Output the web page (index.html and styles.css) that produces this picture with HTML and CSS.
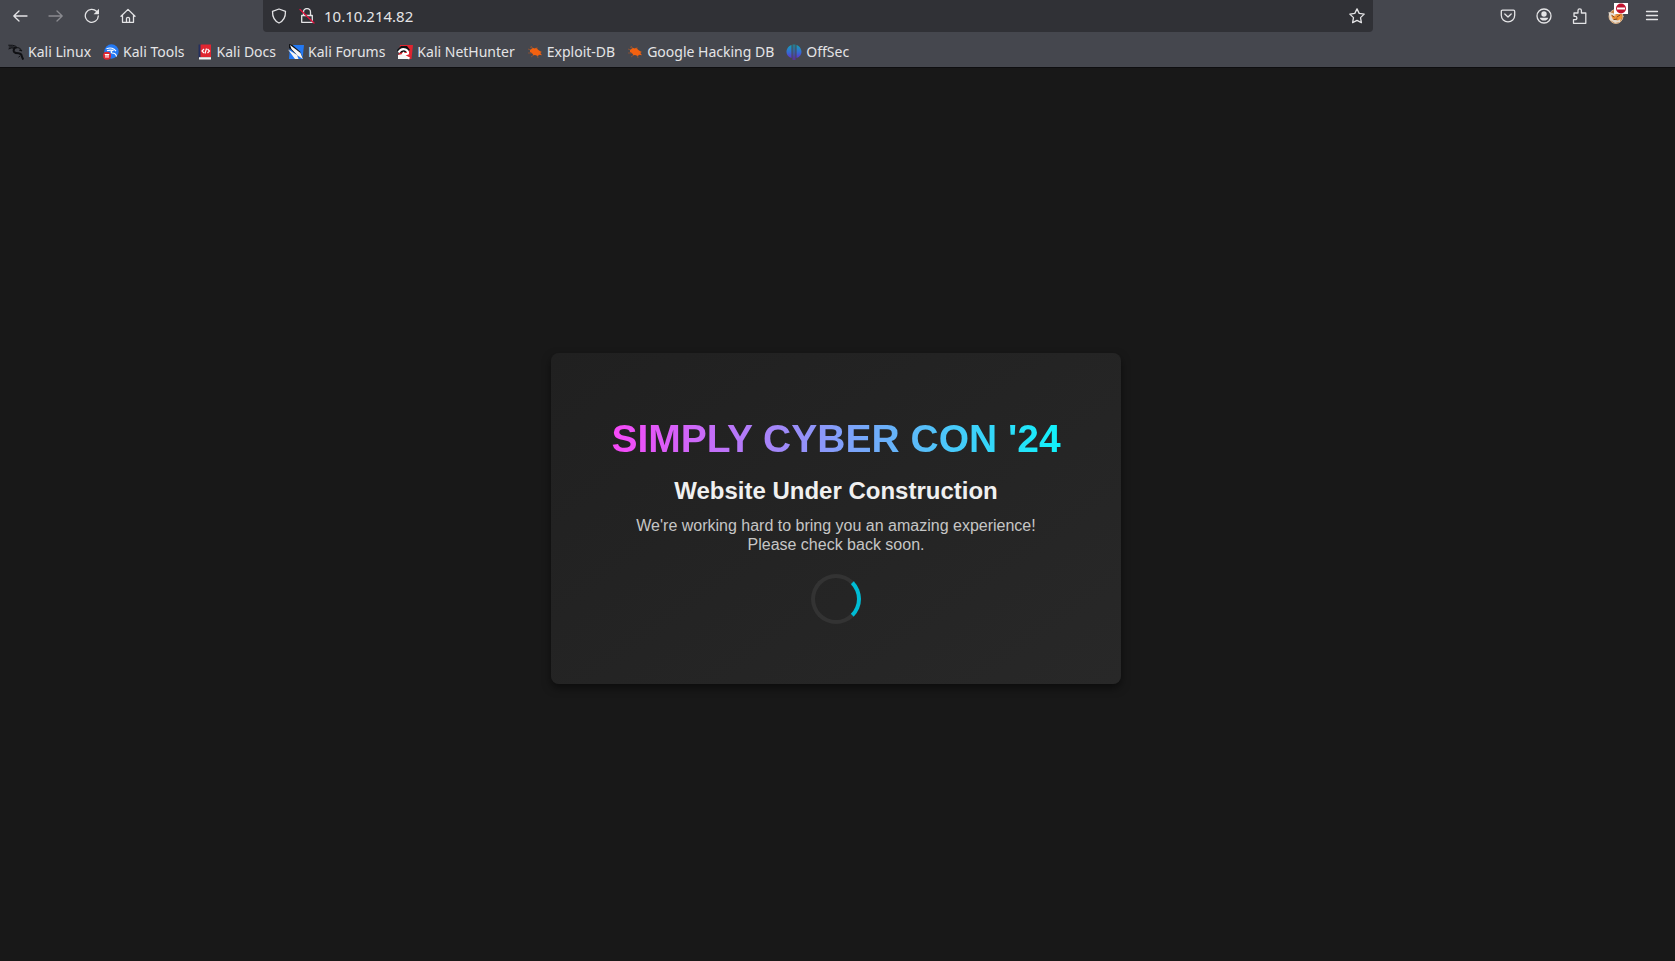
FILE: index.html
```html
<!DOCTYPE html>
<html lang="en">
<head>
<meta charset="utf-8">
<title>Simply Cyber Con '24</title>
<link rel="stylesheet" href="styles.css">
</head>
<body>
<header class="chrome">
  <div class="toolbar">
    <nav class="nav-buttons" aria-label="Navigation">
      <button class="tool" aria-label="Back"><svg viewBox="0 0 16 16"><path d="M15 8H1.800M7 3L1.800 8l5.200 5"/></svg></button>
      <button class="tool" aria-label="Forward" disabled><svg viewBox="0 0 16 16"><path d="M1 8h13.200M9 3L14.200 8l-5.200 5"/></svg></button>
      <button class="tool" aria-label="Reload"><svg viewBox="0 0 16 16"><path d="M14.300 8A6.500 6.500 0 1 1 12.500 3.300"/><path class="solid" d="M15 .8v5.400H9.600z"/></svg></button>
      <button class="tool" aria-label="Home"><svg viewBox="0 0 16 16"><path d="M1 8.300L8 1.400l7 6.900M2.500 7v7.300h11V7M6.500 14v-3.500q0-1.200 1.500-1.200t1.500 1.200V14"/></svg></button>
    </nav>
    <form class="address">
      <button type="button" class="field-icon" aria-label="Tracking protection"><svg viewBox="0 0 16 16"><path d="M8 1L14.500 3.300C14.600 9 12 13.300 8 15 4 13.300 1.400 9 1.500 3.300z"/></svg></button>
      <button type="button" class="field-icon" aria-label="Connection not secure"><svg viewBox="0 0 16 16"><path d="M4.500 7V4a3.500 3.500 0 0 1 7 0v3M2.700 7.500h10.600v6.800H2.700z"/><path class="slash" d="M1 1.500L15 15"/></svg></button>
      <input class="url" type="text" value="10.10.214.82" aria-label="Address">
      <button type="button" class="field-icon" aria-label="Bookmark this page"><svg viewBox="0 0 16 16"><path d="M8 .9l2.200 4.500 5 .7-3.700 3.500.9 5L8 12.300l-4.400 2.300.9-5L.8 6.100l5-.7z"/></svg></button>
    </form>
    <div class="actions">
      <button class="tool" aria-label="Pocket"><svg viewBox="0 0 16 16"><path d="M2.500 2.200h11q1.200 0 1.200 1.200v3.800a6.700 6.700 0 0 1-13.400 0V3.400q0-1.200 1.200-1.200zM4.800 6L8 9l3.200-3"/></svg></button>
      <button class="tool" aria-label="Account"><svg viewBox="0 0 16 16"><circle cx="8" cy="8" r="7"/><circle class="solid" cx="8" cy="6" r="2.700"/><path class="solid" d="M3.800 9.800h8.400Q11.500 12.600 8 12.600T3.800 9.800z"/></svg></button>
      <button class="tool" aria-label="Extensions"><svg viewBox="0 0 16 16"><path d="M1.500 15.300V11.700h1.700a1.700 1.700 0 0 0 0-3.400H2V5h4V2.600a1.700 1.700 0 0 1 3.400 0V5h4.400v10.300z"/></svg></button>
      <button class="tool proxy" aria-label="FoxyProxy, disabled"><svg viewBox="0 0 16 16"><circle class="f-face" cx="8" cy="8.500" r="7"/><path class="f-white" d="M.5 4l4 1L13 9l-1 5-5 1-5-3z"/><path class="f-fur" d="M3 7l3 1 7-3 1 5-4 2.500-5-1z"/><path class="f-eye" d="M4 7.500l2 1.500M9 9l3-2M6 11.500l3-.5"/></svg><svg class="proxy-badge" viewBox="0 0 14 11"><path class="b-bg" d="M0 0h14v11H0z"/><circle class="b-red" cx="7" cy="5.500" r="5"/><path class="b-bar" d="M3 4.500h8v2H3z"/></svg></button>
      <button class="tool" aria-label="Menu"><svg viewBox="0 0 16 16"><path d="M2.500 3.500h11M2.500 7.500h11M2.500 11.500h11"/></svg></button>
    </div>
  </div>
  <nav class="bookmarks" aria-label="Bookmarks">
    <a class="bookmark" href="#"><svg viewBox="0 0 16 16"><path class="scribble" d="M.3 1.200Q5 .8 8.500 2.500M.8 3Q5 2.300 9 4M.5 5Q3 3.300 6.500 4.200"/><path class="body" d="M7.500 3.500Q4.800 5.500 6 7.800q1.200 1.500 4.500 1.500 3.200.5 3.300 3l1.400 3.200"/><path class="scribble" d="M8 3.500l3.500.5 2.500 3-3-1M12 12l-1.500 1.200"/></svg>Kali Linux</a>
    <a class="bookmark" href="#"><svg viewBox="0 0 16 16"><circle class="blue" cx="8.500" cy="7.500" r="7.200"/><path class="line-white" d="M3.500 4.800q4-1.800 7.500.4l2 2M4 6.800q3-1.200 5.500-.4-2.500 1.200-.5 2.600 4 .2 4.500 3.500"/><circle class="red" cx="4" cy="11.800" r="4"/><path class="line-white" d="M1.800 10.500h4.400M3 10.500v3.300M5 10.500v3.300"/></svg>Kali Tools</a>
    <a class="bookmark" href="#"><svg viewBox="0 0 16 16"><path class="navy" d="M1.500.5h3V14h-3z"/><path class="red" d="M3.500.5H14v12.700H3.500z"/><path class="white" d="M2 13.200h12v2.300H2z"/><path class="line-white" d="M7 5L5 7l2 2M10.500 5l2 2-2 2M9.500 4.500L8 9.500"/></svg>Kali Docs</a>
    <a class="bookmark" href="#"><svg viewBox="0 0 16 16"><path class="blue" d="M2 1h14l-1.500 14H1z"/><path class="dragon" d="M1 0l3.500 1L12 7.500l3 7-6-3.500L1 4z"/><path class="white" d="M2 1l6 4.500 4.500 3.500 2.500 6-5.500-3.500L3.500 5zM0 5.500L9 11l1.500 4H7z"/></svg>Kali Forums</a>
    <a class="bookmark" href="#"><svg viewBox="0 0 16 16"><path class="red" d="M3 1h13l-1.500 14H1z"/><path class="dragon" d="M0 6l4-4 6 0 3 4-4 2-8 1z"/><path class="line-white heavy" d="M1.500 8.500Q4 4 8.500 5.500q3 1.500 2.500 4-3 1.500-4.500-.5-2 2 1 3l5 2.500"/><path class="white" d="M1 11l5-1 6 5H1z"/></svg>Kali NetHunter</a>
    <a class="bookmark" href="#"><svg viewBox="0 0 16 16"><path class="legs" d="M1 5l5 2M4 2l4 5M10 3v4M1 9h5M4 13l4-3M11 14l-1-4M15 8l-4 0M3 3l5 3"/><path class="bug" d="M3 6l3-2 2 .5 1-.7 2 2 3 2-.5 1.500 1.500 2-3-.5-1 1.200-3-1-1.500.3L5 9 3 8z"/></svg>Exploit-DB</a>
    <a class="bookmark" href="#"><svg viewBox="0 0 16 16"><path class="legs" d="M1 5l5 2M4 2l4 5M10 3v4M1 9h5M4 13l4-3M11 14l-1-4M15 8l-4 0M3 3l5 3"/><path class="bug" d="M3 6l3-2 2 .5 1-.7 2 2 3 2-.5 1.500 1.500 2-3-.5-1 1.200-3-1-1.500.3L5 9 3 8z"/></svg>Google Hacking DB</a>
    <a class="bookmark" href="#"><svg viewBox="0 0 16 16"><defs><linearGradient id="offsec" x1="0" y1="0" x2="0" y2="1"><stop offset="0" stop-color="#12a5b5"/><stop offset=".5" stop-color="#356bd3"/><stop offset="1" stop-color="#6b20c8"/></linearGradient></defs><path fill="url(#offsec)" d="M5.500 1v13C2 13 .5 10.500.5 8s1.500-5.800 5-7zM10.500 1v13c3.500-1 5-3.500 5-6s-1.500-5.800-5-7zM6.700.5h.9V16h-.9zM8.400.5h.9V16h-.9z"/></svg>OffSec</a>
  </nav>
</header>
<main class="page">
  <section class="card">
    <h1 class="title">SIMPLY CYBER CON '24</h1>
    <h2 class="subtitle">Website Under Construction</h2>
    <p class="message">We're working hard to bring you an amazing experience!<br>Please check back soon.</p>
    <div class="spinner" role="status" aria-label="Loading"></div>
  </section>
</main>
</body>
</html>
```
FILE: styles.css
```css
* { box-sizing: border-box; }
body {
  margin: 0;
  min-height: 100vh;
  display: flex;
  flex-direction: column;
  background: #181818;
  font-family: "Liberation Sans", Arial, sans-serif;
}
button { padding: 0; border: 0; background: none; color: inherit; }
svg { display: block; width: 16px; height: 16px; fill: none; stroke: none; flex: none; }
.chrome {
  background: #45474e;
  color: #e4e4e6;
  border-bottom: 1px solid #0e0e10;
  font-family: "Noto Sans", sans-serif;
}
.toolbar { display: flex; justify-content: space-between; height: 34px; padding: 0 7px 0 4px; }
.nav-buttons, .actions { display: flex; gap: 4px; height: 32px; flex: none; }
.nav-buttons { width: 259px; }
.actions { width: 295px; justify-content: flex-end; }
.tool { width: 32px; display: grid; place-items: center; position: relative; }
.tool svg, .field-icon svg { stroke: currentColor; stroke-width: 1.3; stroke-linejoin: round; stroke-linecap: round; }
.tool:disabled { color: #8a8b90; }
.tool .solid { fill: currentColor; stroke: none; }
.address {
  flex: 1;
  height: 32px;
  display: flex;
  align-items: center;
  padding: 0 8px;
  gap: 12px;
  background: #303136;
  border-radius: 0 0 4px 4px;
}
.field-icon .slash { stroke: #e0103c; }
.url {
  flex: 1;
  min-width: 0;
  padding: 0;
  margin-left: -3px;
  border: 0;
  background: none;
  color: #e4e4e6;
  font: 15px/20px "Noto Sans", sans-serif;
}
.proxy .f-face { fill: #c98243; stroke: #d9b48c; stroke-width: 1; }
.proxy .f-fur { fill: #f29435; stroke: none; }
.proxy .f-white { fill: #e6dccf; stroke: none; }
.proxy .f-eye { stroke: #7b4521; stroke-width: 1; }
.proxy .proxy-badge { position: absolute; top: 3px; right: 4px; width: 14px; height: 11px; stroke: none; }
.b-bg, .b-bar { fill: #fff; }
.b-red { fill: #c2142f; }
.bookmarks { display: flex; gap: 12px; height: 33px; padding: 2px 8px 0; align-items: center; }
.bookmark {
  display: flex;
  align-items: center;
  gap: 4px;
  color: #e4e4e6;
  font-size: 14px;
  line-height: 20px;
  white-space: nowrap;
  text-decoration: none;
}
.dragon { fill: #101114; }
.scribble { stroke: #101114; stroke-width: 1; }
.body { stroke: #101114; stroke-width: 2; }
.blue { fill: #2379f4; }
.red { fill: #e02530; }
.navy { fill: #24305e; }
.white { fill: #f5f5f5; }
.line-white { stroke: #fff; stroke-width: 1.2; }
.heavy { stroke-width: 2; }
.bug { fill: #f26110; }
.legs { stroke: #9b542e; stroke-width: .8; }
.page { flex: 1; display: grid; place-items: center; padding: 7px 3px 0 0; }
.card {
  padding: 60px;
  text-align: center;
  border-radius: 8px;
  background: linear-gradient(145deg, #202020, #282828);
  box-shadow: 0 4px 8px rgba(0, 0, 0, .5);
}
.title {
  margin: 0 0 12px;
  font-size: 39px;
  line-height: 52px;
  color: transparent;
  background: linear-gradient(90deg, #f848f8, #10f2fa);
  background-clip: text;
}
.subtitle { margin: 0 0 11px; color: #f0f0f0; font-size: 24px; line-height: 28px; }
.message { margin: 0 0 20px; color: #c6c6c6; font-size: 16px; line-height: 19px; }
.spinner {
  width: 50px;
  height: 50px;
  margin: 0 auto;
  border: 4px solid #333;
  border-right-color: #00bcd4;
  border-radius: 50%;
}
```
